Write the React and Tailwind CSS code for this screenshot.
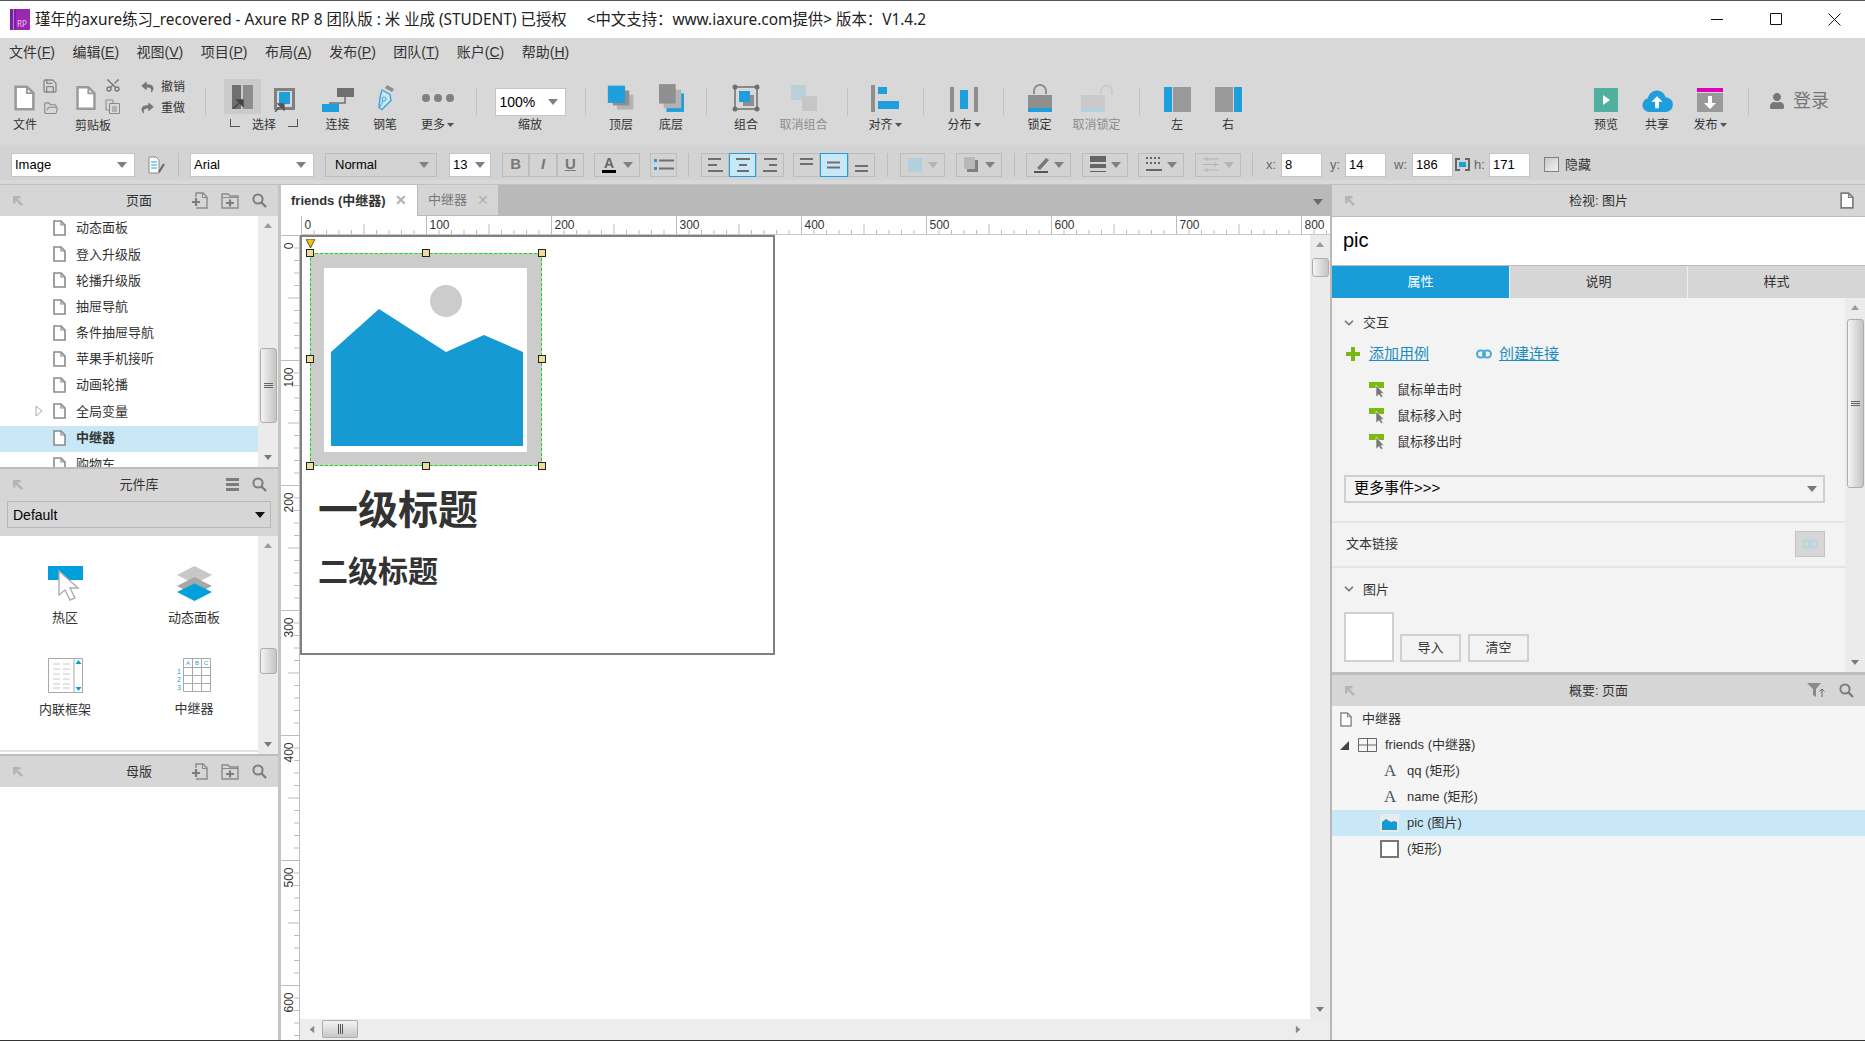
import { FaReply, FaShare, FaUser } from 'react-icons/fa';
import { Scissors, FolderOpen, Save, ChevronDown } from 'lucide-react';

const pages = ['动态面板', '登入升级版', '轮播升级版', '抽屉导航', '条件抽屉导航', '苹果手机接听', '动画轮播', '全局变量'];
const events = ['鼠标单击时', '鼠标移入时', '鼠标移出时'];

function PageIcon({ className = 'w-[13px] h-[16px]', stroke = '#8a8a8a' }) {
  return (
    <svg viewBox="0 0 13 16" className={className}>
      <path d="M1 1h7l4 4v10H1z" fill="#fff" stroke={stroke} strokeWidth="1.6" />
      <path d="M8 1v4h4" fill="none" stroke={stroke} strokeWidth="1.2" />
    </svg>
  );
}

function Caret({ color = '#808080', className = 'w-[10px] h-[6px]' }) {
  return (
    <svg viewBox="0 0 10 6" className={className}>
      <path d="M0 0h10L5 6z" fill={color} />
    </svg>
  );
}

function Pin() {
  return (
    <svg viewBox="0 0 10 10" className="w-[10px] h-[10px]">
      <path d="M0 0h7.500v2.500H4.200L10 8.300 8.300 10 2.500 4.200v3.300H0z" fill="#b4b4b4" />
    </svg>
  );
}

function SearchIcon() {
  return (
    <svg viewBox="0 0 15 15" className="w-[15px] h-[15px]">
      <circle cx="6" cy="6" r="4.6" fill="none" stroke="#7d7d7d" strokeWidth="2" />
      <path d="M9.5 9.5l4.5 4.5" stroke="#7d7d7d" strokeWidth="2.4" />
    </svg>
  );
}

function AddPage() {
  return (
    <svg viewBox="0 0 16 17" className="w-[16px] h-[17px]">
      <path d="M4 5V1h7l4 4v11H4" fill="none" stroke="#8a8a8a" strokeWidth="1.4" />
      <path d="M10.5 1v4.5H15" fill="none" stroke="#8a8a8a" />
      <path d="M0 10h8M4 6v8" stroke="#7d7d7d" strokeWidth="2.2" />
    </svg>
  );
}

function AddFolder() {
  return (
    <svg viewBox="0 0 18 16" className="w-[18px] h-[16px]">
      <path d="M1 15V1h6l2 2h8v12z" fill="none" stroke="#8a8a8a" strokeWidth="1.4" />
      <path d="M1 4.5h16" stroke="#8a8a8a" />
      <path d="M5 10h8M9 6.5v7" stroke="#7d7d7d" strokeWidth="2.2" />
    </svg>
  );
}

function PanelHeader({ title, children }) {
  return (
    <div className="grid grid-cols-[1fr_auto_1fr] items-center h-[31px] bg-[#d6d6d6] shrink-0">
      <div className="pl-[13px] flex">
        <Pin />
      </div>
      <div className="text-[13px] text-[#333]">{title}</div>
      <div className="flex items-center justify-end gap-[13px] pr-[11px]">{children}</div>
    </div>
  );
}

function ScrollBar({ thumbTop, thumbH, grip }) {
  return (
    <div className="relative w-[20px] shrink-0 bg-[#ebebeb] flex flex-col items-center justify-between py-[7px]">
      <Caret color="#9a9a9a" className="w-[8px] h-[5px] rotate-180" />
      <Caret color="#7a7a7a" className="w-[8px] h-[5px]" />
      <div
        className="absolute left-[2px] w-[17px] rounded-[3px] border border-[#adadad] bg-gradient-to-r from-[#f4f4f4] to-[#c4c4c4] flex flex-col items-center justify-center gap-[1px]"
        style={{ top: thumbTop, height: thumbH }}
      >
        {grip && (
          <>
            <div className="w-[9px] h-px bg-[#666]" />
            <div className="w-[9px] h-px bg-[#666]" />
            <div className="w-[9px] h-px bg-[#666]" />
          </>
        )}
      </div>
    </div>
  );
}

function ToolItem({ w, icon, label, muted, caret }) {
  return (
    <div className={`flex flex-col items-center shrink-0 ${w}`}>
      <div className="h-[48px] flex items-end justify-center pb-[2px]">{icon}</div>
      <div className={`mt-[3px] flex items-center gap-[2px] text-[12px] leading-[16px] ${muted ? 'text-[#8d8d8d]' : 'text-[#333]'}`}>
        {label}
        {caret && <Caret color="#555" className="w-[7px] h-[8px]" />}
      </div>
    </div>
  );
}

function Sep({ w }) {
  return (
    <div className={`flex justify-center shrink-0 ${w}`}>
      <div className="w-px h-[28px] mt-[22px] bg-[#c2c2c2]" />
    </div>
  );
}

function Toolbar() {
  return (
    <div className="flex h-[80px] bg-[#d8d8d8] shrink-0">
      {/* file */}
      <div className="w-[70px] shrink-0 relative">
        <div className="absolute left-[14px] top-[18px]">
          <PageIcon className="w-[21px] h-[28px]" stroke="#9a9a9a" />
        </div>
        <Save className="absolute left-[42px] top-[12px] w-[16px] h-[16px] text-[#888]" strokeWidth={2} />
        <FolderOpen className="absolute left-[42px] top-[35px] w-[18px] h-[15px] text-[#888]" strokeWidth={1.8} />
        <div className="absolute left-[13px] top-[51px] text-[12px] leading-[16px] text-[#333]">文件</div>
      </div>
      {/* clipboard */}
      <div className="w-[62px] shrink-0 relative">
        <div className="absolute left-[6px] top-[18px]">
          <PageIcon className="w-[20px] h-[28px]" stroke="#9a9a9a" />
        </div>
        <Scissors className="absolute left-[35px] top-[11px] w-[16px] h-[16px] text-[#777] -rotate-90" strokeWidth={2} />
        <svg viewBox="0 0 15 15" className="absolute left-[35px] top-[33px] w-[15px] h-[15px]">
          <path d="M1 1h7v3M1 1v10h3" fill="none" stroke="#8a8a8a" />
          <path d="M4.5 4.5h10v10h-10z" fill="none" stroke="#8a8a8a" />
          <path d="M7 8h5M7 10h5M7 12h5" stroke="#8a8a8a" />
        </svg>
        <div className="absolute left-[5px] top-[52px] text-[12px] leading-[16px] text-[#333]">剪贴板</div>
      </div>
      {/* undo redo */}
      <div className="w-[68px] shrink-0 pl-[8px] pt-[13px] flex flex-col gap-[5px] text-[12px] leading-[16px] text-[#333]">
        <div className="flex items-center gap-[6px]">
          <FaReply className="w-[15px] h-[12px] text-[#777]" />
          撤销
        </div>
        <div className="flex items-center gap-[6px]">
          <FaShare className="w-[15px] h-[12px] text-[#777]" />
          重做
        </div>
      </div>
      <Sep w="w-[10px]" />
      {/* select */}
      <div className="w-[100px] shrink-0 relative">
        <div className="absolute left-[14px] top-[13px] w-[37px] h-[35px] bg-[#cbcbcb] flex justify-center items-center">
          <svg viewBox="0 0 21 24" className="w-[21px] h-[24px]">
            <path d="M0 0h9v24H0z" fill="#6f6f6f" />
            <path d="M11 0h10v24H11z" fill="#8d8d8d" />
            <path d="M1 24l9-9M5 15h6v6z" stroke="#444" fill="#444" strokeWidth="1.4" />
          </svg>
        </div>
        <svg viewBox="0 0 21 24" className="absolute left-[64px] top-[22px] w-[21px] h-[24px]">
          <path d="M1.5 1.5h18v19h-18z" fill="#d8d8d8" stroke="#808080" strokeWidth="3" />
          <path d="M5 4h11v12H5z" fill="#1e9fdb" />
          <path d="M1 24l8-8M4 16h6v6z" stroke="#555" fill="#555" strokeWidth="1.3" />
        </svg>
        <div className="absolute left-[42px] top-[51px] text-[12px] leading-[16px] text-[#333]">选择</div>
        <div className="absolute left-[20px] top-[53px] w-[10px] h-[8px] border-l border-b border-[#555]" />
        <div className="absolute left-[78px] top-[53px] w-[10px] h-[8px] border-r border-b border-[#555]" />
      </div>
      <ToolItem
        w="w-[55px]"
        label="连接"
        icon={
          <svg viewBox="0 0 32 24" className="w-[32px] h-[24px]">
            <path d="M15 0h17v9H15z" fill="#6f6f6f" />
            <path d="M23 9v6H8v3" fill="none" stroke="#6f6f6f" strokeWidth="1.5" />
            <path d="M0 16h17v8H0z" fill="#1e9fdb" />
          </svg>
        }
      />
      <ToolItem
        w="w-[40px]"
        label="钢笔"
        icon={
          <svg viewBox="0 0 20 28" className="w-[20px] h-[28px]">
            <path d="M12 1l7 4-2 3-7-4z" fill="#8d8d8d" />
            <path d="M8 6l8 4.500 1 6-9 9-3-2 1-10z" transform="translate(-1 0)" fill="#cfe4ee" stroke="#3aa8dc" strokeWidth="1.4" />
            <circle cx="9" cy="15" r="2" fill="none" stroke="#3aa8dc" />
            <path d="M8 17l-3 6" stroke="#3aa8dc" />
          </svg>
        }
      />
      <ToolItem
        w="w-[65px]"
        label="更多"
        caret
        icon={
          <div className="flex gap-[4px] mb-[10px]">
            <div className="w-[8px] h-[8px] rounded-full bg-[#808080]" />
            <div className="w-[8px] h-[8px] rounded-full bg-[#808080]" />
            <div className="w-[8px] h-[8px] rounded-full bg-[#808080]" />
          </div>
        }
      />
      <Sep w="w-[12px]" />
      <div className="w-[96px] shrink-0 flex flex-col items-center">
        <div className="h-[48px] flex items-end justify-center">
          <div className="w-[71px] h-[28px] -mb-[2px] bg-white border border-[#c4c4c4] flex items-center justify-between pl-[4px] pr-[7px] text-[14px] text-black">
            100%
            <Caret />
          </div>
        </div>
        <div className="mt-[3px] text-[12px] leading-[16px] text-[#333]">缩放</div>
      </div>
      <Sep w="w-[14px]" />
      <ToolItem
        w="w-[58px]"
        label="顶层"
        icon={
          <svg viewBox="0 0 34 30" className="w-[28px] h-[28px]">
            <path d="M12 11h20v18H12z" fill="#b3b3b3" />
            <path d="M7 6h20v18H7z" fill="#8f8f8f" />
            <path d="M1 0h21v21H1z" fill="#1e9fdb" />
          </svg>
        }
      />
      <ToolItem
        w="w-[42px]"
        label="底层"
        icon={
          <svg viewBox="0 0 27 30" className="w-[25px] h-[28px]">
            <path d="M8 10h19v20H8z" fill="#1e9fdb" />
            <path d="M5 6h19v20H5z" fill="#b3b3b3" />
            <path d="M0 0h18v21H0z" fill="#8f8f8f" />
          </svg>
        }
      />
      <Sep w="w-[28px]" />
      <ToolItem
        w="w-[52px]"
        label="组合"
        icon={
          <svg viewBox="0 0 28 28" className="w-[28px] h-[28px]">
            <path d="M3 3h22v22H3z" fill="none" stroke="#6f6f6f" strokeWidth="1.5" />
            <circle cx="3" cy="3" r="2.500" fill="#6f6f6f" />
            <circle cx="25" cy="3" r="2.500" fill="#6f6f6f" />
            <circle cx="3" cy="25" r="2.500" fill="#6f6f6f" />
            <circle cx="25" cy="25" r="2.500" fill="#6f6f6f" />
            <path d="M11 11h11v11H11z" fill="#8f8f8f" />
            <path d="M7 7h11v11H7z" fill="#1e9fdb" />
          </svg>
        }
      />
      <ToolItem
        w="w-[63px]"
        label="取消组合"
        muted
        icon={
          <svg viewBox="0 0 28 28" className="w-[28px] h-[28px]">
            <path d="M1 1h15v15H1z" fill="#bcd0da" />
            <path d="M12 12h15v15H12z" fill="#c6c6c6" />
          </svg>
        }
      />
      <Sep w="w-[24px]" />
      <ToolItem
        w="w-[52px]"
        label="对齐"
        caret
        icon={
          <svg viewBox="0 0 28 27" className="w-[28px] h-[27px]">
            <path d="M0 0h4v27H0z" fill="#8f8f8f" />
            <path d="M7 2h9v7H7z" fill="#1e9fdb" />
            <path d="M7 16h21v8H7z" fill="#1e9fdb" />
          </svg>
        }
      />
      <Sep w="w-[24px]" />
      <ToolItem
        w="w-[58px]"
        label="分布"
        caret
        icon={
          <svg viewBox="0 0 28 25" className="w-[28px] h-[25px]">
            <path d="M0 0h4v25H0zM24 0h4v25h-4z" fill="#8f8f8f" />
            <path d="M10 3h8v19h-8z" fill="#1e9fdb" />
          </svg>
        }
      />
      <Sep w="w-[20px]" />
      <ToolItem
        w="w-[53px]"
        label="锁定"
        icon={
          <svg viewBox="0 0 24 28" className="w-[24px] h-[28px]">
            <path d="M6 10V7a6 6 0 0 1 12 0v3" fill="none" stroke="#8f8f8f" strokeWidth="2" />
            <path d="M0 11h24v13H0z" fill="#8f8f8f" />
            <path d="M0 24h24v4H0z" fill="#1e9fdb" />
          </svg>
        }
      />
      <ToolItem
        w="w-[61px]"
        label="取消锁定"
        muted
        icon={
          <svg viewBox="0 0 32 28" className="w-[32px] h-[28px]">
            <path d="M20 10V7a5 5 0 0 1 11 0v3" fill="none" stroke="#cacaca" strokeWidth="2" />
            <path d="M0 11h24v13H0z" fill="#c9c9c9" />
            <path d="M0 24h24v4H0z" fill="#b2d0de" />
          </svg>
        }
      />
      <Sep w="w-[24px]" />
      <ToolItem
        w="w-[52px]"
        label="左"
        icon={
          <svg viewBox="0 0 27 25" className="w-[27px] h-[25px]">
            <path d="M0 0h8v25H0z" fill="#1e9fdb" />
            <path d="M9 0h18v25H9z" fill="#999" />
          </svg>
        }
      />
      <ToolItem
        w="w-[50px]"
        label="右"
        icon={
          <svg viewBox="0 0 27 25" className="w-[27px] h-[25px]">
            <path d="M0 0h18v25H0z" fill="#999" />
            <path d="M19 0h8v25h-8z" fill="#1e9fdb" />
          </svg>
        }
      />
      <div className="flex-1" />
      <ToolItem
        w="w-[52px]"
        label="预览"
        icon={
          <svg viewBox="0 0 24 24" className="w-[24px] h-[24px]">
            <path d="M0 0h24v24H0z" fill="#4fb0a0" />
            <path d="M9 7l7 5-7 5z" fill="#fff" />
          </svg>
        }
      />
      <ToolItem
        w="w-[50px]"
        label="共享"
        icon={
          <svg viewBox="0 0 33 26" className="w-[32px] h-[24px]">
            <path d="M8 26a7.500 7.500 0 0 1-1.500-14.800A10 10 0 0 1 26 10a8 8 0 0 1-.5 16z" fill="#1e9fdb" />
            <path d="M16.500 9l6 6h-4v7h-4v-7h-4z" fill="#fff" />
          </svg>
        }
      />
      <ToolItem
        w="w-[56px]"
        label="发布"
        caret
        icon={
          <svg viewBox="0 0 26 24" className="w-[26px] h-[24px]">
            <path d="M0 0h26v4H0z" fill="#e000b8" />
            <path d="M0 5h26v19H0z" fill="#999" />
            <path d="M11 8h4v7h4l-6 6-6-6h4z" fill="#fff" />
          </svg>
        }
      />
      <Sep w="w-[20px]" />
      <div className="w-[107px] shrink-0 flex items-start pl-[11px] pt-[24px] gap-[8px] text-[18px] leading-[22px] text-[#777]">
        <FaUser className="w-[16px] h-[16px] mt-[3px] text-[#777]" />
        登录
      </div>
    </div>
  );
}

function Lines({ d }) {
  return (
    <svg viewBox="0 0 18 18" className="w-[18px] h-[18px]">
      <path d={d} stroke="#6f6f6f" strokeWidth="2" fill="none" />
    </svg>
  );
}

function BoxBtn({ active, children }) {
  return (
    <div
      className={`flex-1 flex items-center justify-center border ${
        active ? 'bg-[#c8e8f7] border-[#1e9fdb]' : 'border-[#bdbdbd]'
      }`}
    >
      {children}
    </div>
  );
}

function DropBtn({ w, ml, disabled, children }) {
  return (
    <div className={`flex items-center justify-between h-[24px] pl-[7px] pr-[6px] border border-[#bdbdbd] shrink-0 ${w} ${ml}`}>
      {children}
      <Caret color={disabled ? '#b4b4b4' : '#808080'} />
    </div>
  );
}

function NumField({ value }) {
  return (
    <div className="w-[41px] h-[24px] shrink-0 bg-white border border-[#c4c4c4] pl-[3px] text-[13px] leading-[22px] text-black">
      {value}
    </div>
  );
}

function FormatBar() {
  return (
    <div className="flex items-center h-[34px] pt-[3px] bg-[#d3d3d3] shrink-0 text-[13px] text-[#333]">
      <div className="ml-[11px] w-[124px] h-[24px] shrink-0 bg-white border border-[#c4c4c4] flex items-center justify-between pl-[3px] pr-[7px] text-black">
        Image
        <Caret />
      </div>
      <svg viewBox="0 0 17 18" className="ml-[13px] w-[17px] h-[18px] shrink-0">
        <path d="M1 1h7l3 3v13H1z" fill="#fff" stroke="#888" />
        <path d="M3 6h6M3 9h6M3 12h6" stroke="#1e9fdb" />
        <path d="M11 16l5-8" stroke="#666" strokeWidth="2" />
      </svg>
      <div className="ml-[13px] w-px h-[24px] bg-[#bdbdbd] shrink-0" />
      <div className="ml-[11px] w-[124px] h-[24px] shrink-0 bg-white border border-[#c4c4c4] flex items-center justify-between pl-[3px] pr-[7px] text-black">
        Arial
        <Caret />
      </div>
      <div className="ml-[11px] w-[112px] h-[24px] shrink-0 border border-[#bdbdbd] flex items-center justify-between pl-[9px] pr-[7px] text-black">
        Normal
        <Caret />
      </div>
      <div className="ml-[12px] w-[42px] h-[24px] shrink-0 bg-white border border-[#c4c4c4] flex items-center justify-between pl-[3px] pr-[5px] text-black">
        13
        <Caret />
      </div>
      <div className="ml-[11px] w-[82px] h-[24px] shrink-0 flex text-[15px] text-[#777]">
        <BoxBtn><span className="font-bold">B</span></BoxBtn>
        <BoxBtn><span className="font-bold italic">I</span></BoxBtn>
        <BoxBtn><span className="font-bold underline">U</span></BoxBtn>
      </div>
      <DropBtn w="w-[46px]" ml="ml-[10px]">
        <span className="flex flex-col items-center text-[14px] leading-[14px] font-bold text-[#666]">
          A
          <span className="w-[14px] h-[3px] bg-black" />
        </span>
      </DropBtn>
      <div className="ml-[10px] w-[27px] h-[24px] shrink-0 flex">
        <BoxBtn>
          <svg viewBox="0 0 20 12" className="w-[20px] h-[12px]">
            <path d="M0 0h3v3H0zM0 8h3v3H0z" fill="#1e9fdb" />
            <path d="M5 1.500h15M5 9.500h15" stroke="#6f6f6f" strokeWidth="2" />
          </svg>
        </BoxBtn>
      </div>
      <div className="ml-[11px] w-px h-[24px] bg-[#bdbdbd] shrink-0" />
      <div className="ml-[12px] w-[83px] h-[24px] shrink-0 flex">
        <BoxBtn><Lines d="M2 3h13M2 9h9M2 15h15" /></BoxBtn>
        <BoxBtn active><Lines d="M2 3h14M5 9h8M3 15h12" /></BoxBtn>
        <BoxBtn><Lines d="M3 3h13M8 9h8M2 15h14" /></BoxBtn>
      </div>
      <div className="ml-[9px] w-[82px] h-[24px] shrink-0 flex">
        <BoxBtn><Lines d="M2 3h13M2 8h13" /></BoxBtn>
        <BoxBtn active><Lines d="M2 6.500h13M2 11.500h13" /></BoxBtn>
        <BoxBtn><Lines d="M3 10h13M3 15h13" /></BoxBtn>
      </div>
      <div className="ml-[12px] w-px h-[24px] bg-[#bdbdbd] shrink-0" />
      <DropBtn w="w-[45px]" ml="ml-[12px]" disabled>
        <div className="w-[14px] h-[14px] bg-[#b2cfde]" />
      </DropBtn>
      <DropBtn w="w-[46px]" ml="ml-[11px]">
        <svg viewBox="0 0 14 15" className="w-[14px] h-[15px]">
          <path d="M3 3h11v12H3z" fill="#808080" />
          <path d="M0 0h11v12H0z" fill="#b8b8b8" />
        </svg>
      </DropBtn>
      <div className="ml-[12px] w-px h-[24px] bg-[#bdbdbd] shrink-0" />
      <DropBtn w="w-[45px]" ml="ml-[11px]">
        <svg viewBox="0 0 16 16" className="w-[16px] h-[16px]">
          <path d="M3 11L12 1l3 2-9 10z" fill="#777" />
          <path d="M0 14h14v2H0z" fill="#555" />
        </svg>
      </DropBtn>
      <DropBtn w="w-[46px]" ml="ml-[11px]">
        <svg viewBox="0 0 16 17" className="w-[16px] h-[17px]">
          <path d="M0 0h16v6H0zM0 8h16v4H0zM0 15h16v1H0z" fill="#666" />
        </svg>
      </DropBtn>
      <DropBtn w="w-[46px]" ml="ml-[10px]">
        <svg viewBox="0 0 16 15" className="w-[16px] h-[15px]">
          <path d="M0 1h16M0 6h16" stroke="#666" strokeWidth="2" strokeDasharray="2 2" fill="none" />
          <path d="M0 13h16" stroke="#666" strokeWidth="2" fill="none" />
        </svg>
      </DropBtn>
      <DropBtn w="w-[46px]" ml="ml-[11px]" disabled>
        <svg viewBox="0 0 16 15" className="w-[16px] h-[15px]">
          <path d="M0 2h16M0 7.500h16M0 13h16" stroke="#b4b4b4" />
          <path d="M4 0v4M12 5v5M4 11v4" stroke="#b4b4b4" />
        </svg>
      </DropBtn>
      <div className="ml-[11px] w-px h-[24px] bg-[#bdbdbd] shrink-0" />
      <div className="ml-[13px] w-[15px] shrink-0 text-[#666]">x:</div>
      <NumField value="8" />
      <div className="ml-[8px] w-[15px] shrink-0 text-[#666]">y:</div>
      <NumField value="14" />
      <div className="ml-[8px] w-[18px] shrink-0 text-[#666]">w:</div>
      <NumField value="186" />
      <svg viewBox="0 0 15 13" className="ml-[2px] w-[15px] h-[13px] shrink-0">
        <path d="M5 1H1v11h4M10 1h4v11h-4" fill="none" stroke="#666" strokeWidth="2" />
        <path d="M4 4h7v5H4z" fill="#1e9fdb" />
      </svg>
      <div className="ml-[4px] w-[15px] shrink-0 text-[#666]">h:</div>
      <NumField value="171" />
      <div className="ml-[14px] w-[15px] h-[15px] shrink-0 border border-[#808080] bg-gradient-to-br from-[#c8c8c8] to-[#f2f2f2]" />
      <div className="ml-[6px]">隐藏</div>
    </div>
  );
}

function LeftColumn() {
  return (
    <div className="w-[278px] shrink-0 flex flex-col bg-[#d6d6d6]">
      <PanelHeader title="页面">
        <AddPage />
        <AddFolder />
        <SearchIcon />
      </PanelHeader>
      <div className="flex h-[253px] bg-white border-b-2 border-[#bdbdbd] shrink-0">
        <div className="flex-1 overflow-hidden text-[13px] text-[#333]">
          {pages.map((name) => (
            <div key={name} className="flex items-center h-[26.2px] pl-[35px] pb-[2px]">
              <div className="w-[18px] shrink-0">
                {name === '全局变量' && (
                  <svg viewBox="0 0 8 12" className="w-[8px] h-[12px]">
                    <path d="M1 1l6 5-6 5z" fill="#fff" stroke="#aaa" />
                  </svg>
                )}
              </div>
              <PageIcon />
              <span className="ml-[10px]">{name}</span>
            </div>
          ))}
          <div className="flex items-center h-[26px] pl-[53px] pb-[1px] bg-[#c8e8f7] font-bold">
            <PageIcon />
            <span className="ml-[10px]">中继器</span>
          </div>
          <div className="flex items-center h-[26px] pl-[53px]">
            <PageIcon />
            <span className="ml-[10px]">购物车</span>
          </div>
        </div>
        <ScrollBar thumbTop={132} thumbH={75} grip />
      </div>
      {/* library */}
      <div className="shrink-0">
        <PanelHeader title="元件库">
          <svg viewBox="0 0 13 13" className="w-[13px] h-[13px]">
            <path d="M0 0h13v3H0zM0 5h13v3H0zM0 10h13v3H0z" fill="#7d7d7d" />
          </svg>
          <SearchIcon />
        </PanelHeader>
        <div className="h-[36px] px-[7px] pt-[1px]">
          <div className="h-[27px] pt-[1px] border border-[#b8b8b8] flex items-center justify-between pl-[5px] pr-[5px] text-[14px] text-black">
            Default
            <Caret color="#111" />
          </div>
        </div>
      </div>
      <div className="flex h-[218px] bg-white shrink-0">
        <div className="flex-1 flex flex-col">
          <div className="flex-1 grid grid-cols-[130px_128px] grid-rows-[92px_92px] pt-[30px] text-[13px] text-[#333] text-center">
            <div className="flex flex-col items-center">
              <svg viewBox="0 0 35 35" className="w-[35px] h-[35px]">
                <path d="M0 0h35v14H0z" fill="#00a0dc" />
                <path d="M11 5v24l6-5 5 10 5-2-5-10h8z" fill="#fff" stroke="#adadad" strokeWidth="1.4" />
              </svg>
              <div className="mt-[8px] leading-[18px]">热区</div>
            </div>
            <div className="flex flex-col items-center">
              <svg viewBox="0 0 35 35" className="w-[35px] h-[35px]">
                <path d="M17.500 0L35 9 17.500 18 0 9z" fill="#c8c8c8" />
                <path d="M17.500 11L35 20 17.500 29 0 20z" fill="#a8a8a8" />
                <path d="M17.500 17.500L35 26 17.500 35 0 26z" fill="#00a0dc" />
              </svg>
              <div className="mt-[8px] leading-[18px]">动态面板</div>
            </div>
            <div className="flex flex-col items-center">
              <svg viewBox="0 0 35 35" className="w-[35px] h-[35px]">
                <path d="M.5.500h34v34H.5z" fill="#fff" stroke="#a8a8a8" />
                <path d="M26 0v35" stroke="#a8a8a8" />
                <path d="M5 6h7M15 6h7M5 11h7M15 11h7M5 16h7M15 16h7M5 21h7M15 21h7M5 26h7M15 26h7M5 30h7M15 30h7" stroke="#c8c8c8" />
                <path d="M30.500 2l3 4h-6zM30.500 33l3-4h-6z" fill="#00a0dc" />
              </svg>
              <div className="mt-[8px] leading-[18px]">内联框架</div>
            </div>
            <div className="flex flex-col items-center">
              <svg viewBox="0 0 34 34" className="w-[34px] h-[34px]">
                <path d="M6.500.500h27v33h-27zM6.500 9.500h27M6.500 17.500h27M6.500 25.500h27M15.500.500v33M24.500.500v33" fill="none" stroke="#a8a8a8" />
                <text x="11" y="7" fontSize="6" textAnchor="middle" fill="#1e9fdb">A</text>
                <text x="20" y="7" fontSize="6" textAnchor="middle" fill="#1e9fdb">B</text>
                <text x="29" y="7" fontSize="6" textAnchor="middle" fill="#1e9fdb">C</text>
                <text x="2" y="16" fontSize="7" textAnchor="middle" fill="#1e9fdb">1</text>
                <text x="2" y="24" fontSize="7" textAnchor="middle" fill="#1e9fdb">2</text>
                <text x="2" y="32" fontSize="7" textAnchor="middle" fill="#1e9fdb">3</text>
              </svg>
              <div className="mt-[8px] leading-[18px]">中继器</div>
            </div>
          </div>
          <div className="h-[11px] border-t-2 border-[#e3e3e3]" />
        </div>
        <ScrollBar thumbTop={112} thumbH={26} />
      </div>
      <div className="h-[2px] bg-[#bdbdbd] shrink-0" />
      <PanelHeader title="母版">
        <AddPage />
        <AddFolder />
        <SearchIcon />
      </PanelHeader>
      <div className="flex-1 bg-white" />
    </div>
  );
}

function TopRuler() {
  const ticks = Array.from({ length: 84 }, (_, i) => i);
  return (
    <svg className="block h-[19px] w-full shrink-0" height="19">
      <path d="M20 18.500H1049" stroke="#c8c8c8" />
      {ticks.map((i) => {
        const x = 20.5 + i * 12.5;
        const len = i % 10 === 0 ? 18 : i % 5 === 0 ? 10 : 4;
        return (
          <g key={i}>
            <path d={`M${x} 18V${18 - len}`} stroke="#bdbdbd" />
            {i % 10 === 0 && (
              <text x={x + 3} y={13} fontSize="12" fill="#333" fontFamily="Liberation Sans">
                {i * 10}
              </text>
            )}
          </g>
        );
      })}
    </svg>
  );
}

function LeftRuler() {
  const ticks = Array.from({ length: 65 }, (_, i) => i);
  return (
    <svg className="block w-[19px] h-full shrink-0" width="19">
      <path d="M18.500 0V806" stroke="#bdbdbd" />
      {ticks.map((i) => {
        const y = 0.5 + i * 12.5;
        const len = i % 10 === 0 ? 18 : i % 5 === 0 ? 11 : 5;
        return (
          <g key={i}>
            <path d={`M18 ${y}H${18 - len}`} stroke="#bdbdbd" />
            {i % 10 === 0 && (
              <text
                transform={`translate(12 ${y + 7}) rotate(-90)`}
                textAnchor="end"
                fontSize="12"
                fill="#333"
                fontFamily="Liberation Sans"
              >
                {i * 10}
              </text>
            )}
          </g>
        );
      })}
    </svg>
  );
}

function Handle({ className }) {
  return <div className={`absolute w-[8px] h-[8px] border-[1.5px] border-[#222] bg-[#efdb9c] ${className}`} />;
}

function Artboard() {
  return (
    <div className="relative w-[475px] h-[420px] border-2 border-[#808080] bg-white shrink-0">
      <div className="relative w-[232px] h-[213px] ml-[8px] mt-[16px]">
        <svg viewBox="0 0 232 213" className="block w-[232px] h-[213px]">
          <path d="M0 0h232v213H0z" fill="#cccccc" />
          <path d="M14 15h203v184H14z" fill="#fff" />
          <circle cx="136" cy="48" r="16" fill="#cccccc" />
          <path d="M21 99l48-43 67 43 38-17 39 17v94H21z" fill="#169ad4" />
        </svg>
        <div className="absolute inset-0 border border-dashed border-[#00e600]" />
        <Handle className="-left-[4px] -top-[4px]" />
        <Handle className="left-[112px] -top-[4px]" />
        <Handle className="-right-[4px] -top-[4px]" />
        <Handle className="-left-[4px] top-[102px]" />
        <Handle className="-right-[4px] top-[102px]" />
        <Handle className="-left-[4px] -bottom-[4px]" />
        <Handle className="left-[112px] -bottom-[4px]" />
        <Handle className="-right-[4px] -bottom-[4px]" />
        <svg viewBox="0 0 10 10" className="absolute -left-[4px] -top-[14px] w-[9px] h-[9px]">
          <path d="M0 0h10L5 10z" fill="#f4c400" stroke="#444" />
        </svg>
      </div>
      <div className="ml-[16px] mt-[20px] text-[40px] leading-[48px] font-bold text-[#333]">一级标题</div>
      <div className="ml-[16px] mt-[20px] text-[30px] leading-[36px] font-bold text-[#333]">二级标题</div>
    </div>
  );
}

function CenterColumn() {
  return (
    <div className="flex-1 min-w-0 flex flex-col bg-white">
      <div className="flex h-[31px] bg-[#b9b9b9] shrink-0 items-start">
        <div className="w-[136px] h-[31px] bg-white flex items-center pl-[10px] pr-[10px] justify-between text-[13px] font-bold text-[#333]">
          friends (中继器)
          <span className="text-[#b0b0b0] text-[14px]">✕</span>
        </div>
        <div className="ml-px w-[80px] h-[30px] bg-[#d5d5d5] flex items-center pl-[10px] pr-[9px] justify-between text-[13px] text-[#777]">
          中继器
          <span className="text-[#b0b0b0] text-[14px]">✕</span>
        </div>
        <div className="flex-1" />
        <div className="mt-[14px] mr-[7px]">
          <Caret color="#6a6a6a" />
        </div>
      </div>
      <TopRuler />
      <div className="flex-1 min-h-0 flex">
        <div className="w-[19px] shrink-0 overflow-hidden">
          <LeftRuler />
        </div>
        <div className="flex-1 min-w-0 flex flex-col">
          <div className="flex-1 min-h-0 flex">
            <div className="flex-1 min-w-0">
              <Artboard />
            </div>
            <ScrollBar thumbTop={23} thumbH={19} />
          </div>
          <div className="flex h-[21px] bg-[#ededed] shrink-0 items-center relative">
            <div className="flex-1 flex items-center justify-between pl-[8px] pr-[28px]">
              <Caret color="#8a8a8a" className="w-[8px] h-[5px] rotate-90" />
              <Caret color="#8a8a8a" className="w-[8px] h-[5px] -rotate-90" />
            </div>
            <div className="absolute left-[22px] top-[1px] w-[36px] h-[18px] rounded-[2px] border border-[#adadad] bg-gradient-to-b from-[#f4f4f4] to-[#c8c8c8] flex items-center justify-center gap-[1px]">
              <div className="w-px h-[10px] bg-[#555]" />
              <div className="w-px h-[10px] bg-[#555]" />
              <div className="w-px h-[10px] bg-[#555]" />
            </div>
          </div>
        </div>
      </div>
    </div>
  );
}

function SectionHead({ title }) {
  return (
    <div className="flex items-center text-[13px] text-[#333]">
      <ChevronDown className="w-[14px] h-[14px] text-[#777]" strokeWidth={3} />
      <span className="ml-[7px]">{title}</span>
    </div>
  );
}

function ChainIcon({ color = '#49a9d8' }) {
  return (
    <svg viewBox="0 0 16 10" className="w-[16px] h-[10px]">
      <rect x="1" y="1.500" width="8" height="7" rx="3.500" fill="none" stroke={color} strokeWidth="2" />
      <rect x="7" y="1.500" width="8" height="7" rx="3.500" fill="none" stroke={color} strokeWidth="2" />
    </svg>
  );
}

function RightColumn() {
  return (
    <div className="w-[533px] shrink-0 flex flex-col bg-[#f4f4f4]">
      <PanelHeader title="检视: 图片">
        <PageIcon className="w-[14px] h-[17px]" stroke="#7d7d7d" />
      </PanelHeader>
      <div className="h-[50px] shrink-0 bg-white flex items-center pl-[11px] pb-[2px] border-t border-b border-[#bdbdbd] text-[20px] text-black">
        pic
      </div>
      <div className="flex h-[32px] shrink-0 text-[13px] text-[#333] gap-[1px] bg-[#eeeeee]">
        <div className="flex-1 bg-[#199dd9] text-white flex items-center justify-center">属性</div>
        <div className="flex-1 bg-[#d6d6d6] flex items-center justify-center">说明</div>
        <div className="flex-1 bg-[#d6d6d6] flex items-center justify-center">样式</div>
      </div>
      <div className="flex h-[374px] shrink-0 bg-[#f3f3f3]">
        <div className="flex-1 min-w-0">
          <div className="pl-[10px] pt-[15px]">
            <SectionHead title="交互" />
          </div>
          <div className="flex items-center mt-[11px] pl-[14px] text-[15px] leading-[20px] text-[#1a8bc0]">
            <svg viewBox="0 0 14 14" className="w-[14px] h-[14px]">
              <path d="M5 0h4v5h5v4H9v5H5V9H0V5h5z" fill="#7cb518" />
            </svg>
            <span className="ml-[9px] underline">添加用例</span>
            <div className="ml-[47px]">
              <ChainIcon />
            </div>
            <span className="ml-[7px] underline">创建连接</span>
          </div>
          <div className="mt-[13px] pl-[37px] text-[13px] text-[#333]">
            {events.map((e) => (
              <div key={e} className="flex items-center h-[26px]">
                <svg viewBox="0 0 15 16" className="w-[15px] h-[16px]">
                  <path d="M0 0h15v6H0z" fill="#7cba0f" />
                  <path d="M7 3v12l3-2.500 2 3 2-1-2-3h3z" fill="#777" stroke="#f3f3f3" strokeWidth=".6" />
                </svg>
                <span className="ml-[13px]">{e}</span>
              </div>
            ))}
          </div>
          <div className="ml-[12px] mt-[20px] w-[481px] h-[28px] border-2 border-[#cfcfcf] flex items-center justify-between pl-[8px] pr-[6px] text-[15px] text-black">
            更多事件&gt;&gt;&gt;
            <Caret color="#777" />
          </div>
          <div className="mt-[18px] h-[2px] bg-[#e4e4e4]" />
          <div className="flex items-center justify-between h-[43px] pl-[14px] pr-[20px] text-[13px] text-[#333]">
            文本链接
            <div className="w-[30px] h-[26px] bg-[#d6d6d6] border border-[#c4c4c4] flex items-center justify-center">
              <ChainIcon color="#b5d3e2" />
            </div>
          </div>
          <div className="h-[2px] bg-[#e4e4e4]" />
          <div className="pl-[10px] pt-[12px]">
            <SectionHead title="图片" />
          </div>
          <div className="flex items-end pl-[12px] mt-[13px] text-[13px] text-[#333]">
            <div className="w-[50px] h-[50px] bg-white border-2 border-[#d0d0d0]" />
            <div className="ml-[6px] w-[61px] h-[28px] border-2 border-[#d0d0d0] flex items-center justify-center">导入</div>
            <div className="ml-[7px] w-[61px] h-[28px] border-2 border-[#d0d0d0] flex items-center justify-center">清空</div>
          </div>
        </div>
        <div className="flex">
          <ScrollBar thumbTop={21} thumbH={169} grip />
        </div>
      </div>
      <div className="h-[3px] bg-[#bdbdbd] shrink-0" />
      <PanelHeader title="概要: 页面">
        <svg viewBox="0 0 19 15" className="w-[19px] h-[15px]">
          <path d="M0 0h14L9 6v8L6 12V6z" fill="#8a8a8a" />
          <path d="M15 14V6M12.500 8.500L15 6l2.500 2.500" stroke="#666" fill="none" />
        </svg>
        <SearchIcon />
      </PanelHeader>
      <div className="flex-1 bg-[#f5f5f5] text-[13px] text-[#333]">
        <div className="flex items-center h-[26px] pl-[8px]">
          <PageIcon className="w-[12px] h-[15px]" />
          <span className="ml-[10px]">中继器</span>
        </div>
        <div className="flex items-center h-[26px] pl-[8px]">
          <svg viewBox="0 0 9 9" className="w-[9px] h-[9px]">
            <path d="M9 0v9H0z" fill="#444" />
          </svg>
          <svg viewBox="0 0 19 14" className="ml-[9px] w-[19px] h-[14px]">
            <path d="M.5.500h18v13H.5zM.5 7h18M9.500.500v13" fill="none" stroke="#666" />
          </svg>
          <span className="ml-[8px]">friends (中继器)</span>
        </div>
        <div className="flex items-center h-[26px] pl-[52px]">
          <span className="w-[13px] text-[17px] leading-[20px] text-[#555] font-['Liberation_Serif',serif]">A</span>
          <span className="ml-[10px]">qq (矩形)</span>
        </div>
        <div className="flex items-center h-[26px] pl-[52px]">
          <span className="w-[13px] text-[17px] leading-[20px] text-[#555] font-['Liberation_Serif',serif]">A</span>
          <span className="ml-[10px]">name (矩形)</span>
        </div>
        <div className="flex items-center h-[26px] pl-[48px] bg-[#c8e8f7]">
          <svg viewBox="0 0 19 18" className="w-[19px] h-[18px]">
            <path d="M0 0h19v18H0z" fill="#eaeaea" />
            <path d="M2 8l4-3 5 3 3-1 3 1v8H2z" fill="#169ad4" />
          </svg>
          <span className="ml-[8px]">pic (图片)</span>
        </div>
        <div className="flex items-center h-[26px] pl-[48px]">
          <div className="w-[19px] h-[18px] bg-white border-2 border-[#777]" />
          <span className="ml-[8px]">(矩形)</span>
        </div>
      </div>
    </div>
  );
}

export default function App() {
  return (
    <div className="w-[1865px] h-[1041px] overflow-hidden flex flex-col bg-[#d8d8d8] border-b border-[#333] font-['Liberation_Sans','Noto_Sans_CJK_SC',sans-serif]">
      <div className="h-[38px] shrink-0 bg-white border-t border-[#555] flex items-center pl-[10px] text-[15.4px] text-[#222] font-['Noto_Sans','Noto_Sans_CJK_SC',sans-serif]">
        <svg viewBox="0 0 20 21" className="w-[20px] h-[21px] shrink-0">
          <path d="M0 0h20v21H0z" fill="#7a1fa2" />
          <path d="M3 0h1v21H3z" fill="#c77ddb" />
          <path d="M6 0h14v21H6z" fill="#9c27b0" />
          <text x="7" y="18" fontSize="8" fill="#e9c6f0">RP</text>
        </svg>
        <span className="ml-[5px] whitespace-pre">瑾年的axure练习_recovered - Axure RP 8 团队版 : 米 业成 (STUDENT) 已授权</span>
        <span className="ml-[20px] whitespace-pre">&lt;中文支持：www.iaxure.com提供&gt; 版本：V1.4.2</span>
        <div className="flex-1" />
        <svg viewBox="0 0 130 13" className="w-[130px] h-[13px] mr-[24px]">
          <path d="M0 6.500h12" stroke="#111" />
          <path d="M59.500.500h11v11h-11z" fill="none" stroke="#111" />
          <path d="M117.500.500l12 12M129.500.500l-12 12" stroke="#111" />
        </svg>
      </div>
      <div className="h-[28px] shrink-0 flex items-center pl-[9px] text-[14px] text-[#333] gap-[17.5px]">
        {[['文件', 'F'], ['编辑', 'E'], ['视图', 'V'], ['项目', 'P'], ['布局', 'A'], ['发布', 'P'], ['团队', 'T'], ['账户', 'C'], ['帮助', 'H']].map(([name, key]) => (
          <span key={name}>
            {name}(<span className="underline">{key}</span>)
          </span>
        ))}
      </div>
      <Toolbar />
      <FormatBar />
      <div className="h-[5px] shrink-0 bg-[#d8d8d8] border-b border-[#c0c0c0]" />
      <div className="flex-1 min-h-0 flex">
        <LeftColumn />
        <div className="w-[3px] shrink-0 bg-[#c4c4c4]" />
        <CenterColumn />
        <div className="w-[2px] shrink-0 bg-[#b8b8b8]" />
        <RightColumn />
      </div>
    </div>
  );
}
